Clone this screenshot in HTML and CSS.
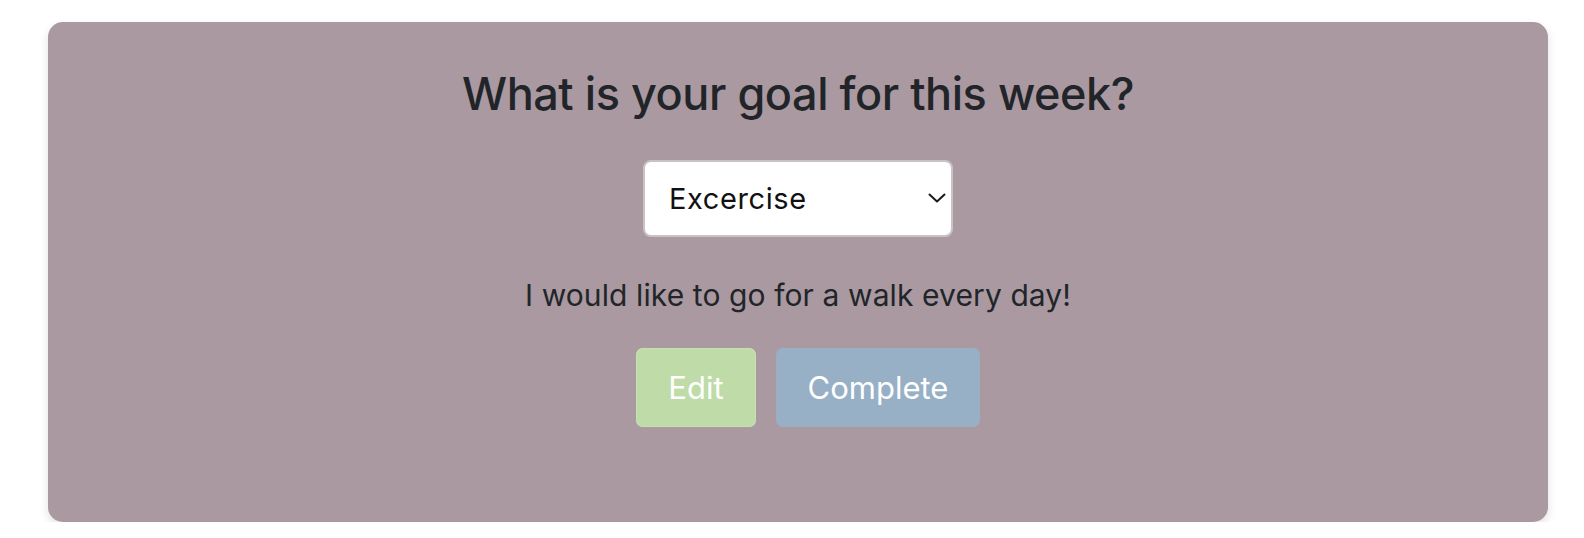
FILE: index.html
```html
<!DOCTYPE html>
<html>
<head>
<meta charset="utf-8">
<link rel="stylesheet" href="styles.css">
</head>
<body>
<main class="card">
  <h1 class="title">What is your goal for this week?</h1>
  <div class="select-wrap">
    <select class="goal-select">
      <option>Excercise</option>
      <option>Reading</option>
      <option>Sleep</option>
    </select>
    <svg class="chevron" width="18" height="10" viewBox="0 0 18 10"><path d="M1.5 1.5 L9 8.5 L16.5 1.5" fill="none" stroke="#1a1a1a" stroke-width="2" stroke-linecap="round" stroke-linejoin="round"/></svg>
  </div>
  <p class="goal-text">I would like to go for a walk every day!</p>
  <div class="actions">
    <button class="btn btn-edit">Edit</button>
    <button class="btn btn-complete">Complete</button>
  </div>
</main>
</body>
</html>
```
FILE: styles.css
```css
html, body {
  margin: 0;
  padding: 0;
  background: #ffffff;
}
body {
  padding: 22px 0 0 48px;
  font-family: Inter, "Noto Sans", "Liberation Sans", sans-serif;
  color: #212529;
}
.card {
  width: 1500px;
  height: 500px;
  box-sizing: border-box;
  background: #aa99a0;
  border-radius: 15px;
  box-shadow: 0 4px 10px rgba(0, 0, 0, 0.12);
  padding-top: 45px;
  display: flex;
  flex-direction: column;
  align-items: center;
}
.title {
  margin: 0;
  font-size: 45px;
  line-height: 54px;
  font-weight: 500;
  letter-spacing: -0.45px;
}
.select-wrap {
  position: relative;
  margin-top: 39px;
  width: 310px;
  height: 77px;
}
.goal-select {
  appearance: none;
  -webkit-appearance: none;
  width: 100%;
  height: 100%;
  box-sizing: border-box;
  border: 2px solid #cac3c6;
  border-radius: 8px;
  background: #ffffff;
  padding: 0 24px;
  font-family: inherit;
  font-size: 29px;
  letter-spacing: 0.6px;
  color: #111;
  outline: none;
}
.chevron {
  position: absolute;
  right: 7px;
  top: 33px;
  pointer-events: none;
}
.goal-text {
  margin: 36px 0 0;
  font-size: 30px;
  line-height: 45px;
  letter-spacing: 0.1px;
}
.actions {
  margin-top: 30px;
  margin-left: 20px;
  display: flex;
  gap: 20px;
}
.btn {
  height: 79px;
  border: none;
  border-radius: 7px;
  color: #ffffff;
  font-family: inherit;
  font-size: 31px;
  padding: 0;
}
.btn-edit {
  width: 120px;
  background: #bedba8;
  box-shadow: inset 0 0 0 1px #c6e0b1;
}
.btn-complete {
  width: 204px;
  background: #97b0c6;
}
```
